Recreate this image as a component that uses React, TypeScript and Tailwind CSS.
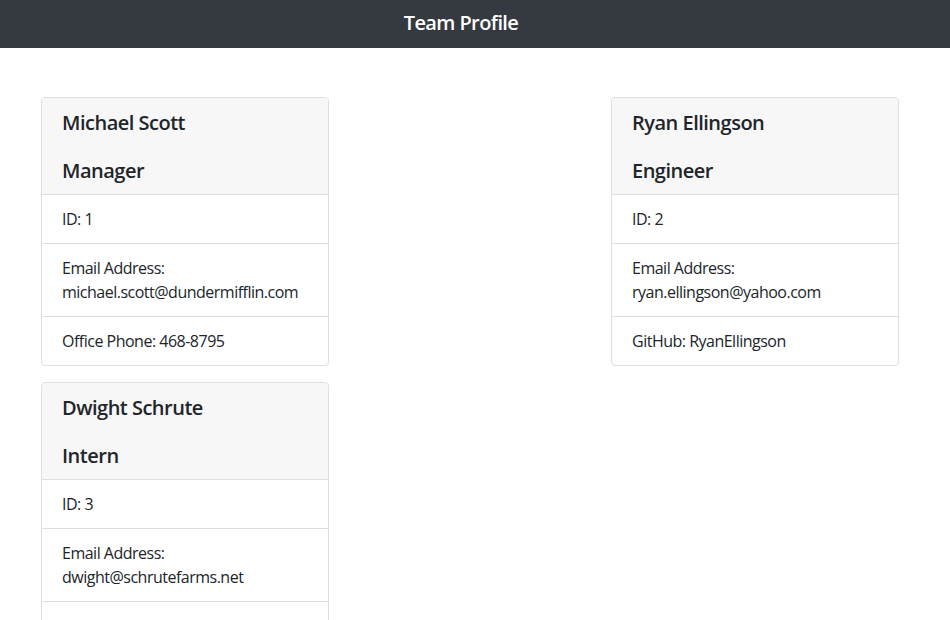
import React from "react";

type Emp = { name: string; role: string; id: number; email: string; extra: string };

const emps: Emp[] = [
  { name: "Michael Scott", role: "Manager", id: 1, email: "michael.scott@dundermifflin.com", extra: "Office Phone: 468-8795" },
  { name: "Ryan Ellingson", role: "Engineer", id: 2, email: "ryan.ellingson@yahoo.com", extra: "GitHub: RyanEllingson" },
  { name: "Dwight Schrute", role: "Intern", id: 3, email: "dwight@schrutefarms.net", extra: "School: Scranton University" },
];

function Card({ e }: { e: Emp }) {
  return (
    <div className="w-[288px] mb-[16px] border border-[#dfdfdf] rounded-[4px] bg-white overflow-hidden">
      <div className="bg-[#f7f7f7] border-b border-[#dfdfdf] px-[20px] pt-[13px] pb-[11px] flex flex-col gap-[24px]">
        <h5 className="text-[20px] leading-[24px] font-semibold tracking-[-0.5px] text-[#212529]">{e.name}</h5>
        <h5 className="text-[20px] leading-[24px] font-semibold tracking-[-0.5px] text-[#212529]">{e.role}</h5>
      </div>
      <ul className="text-[16px] leading-[24px] tracking-[-0.5px]">
        <li className="px-[20px] py-[12px] border-b border-[#dfdfdf]">ID: {e.id}</li>
        <li className="px-[20px] py-[12px] border-b border-[#dfdfdf]">
          Email Address: <span>{e.email}</span>
        </li>
        <li className="px-[20px] py-[12px]">{e.extra}</li>
      </ul>
    </div>
  );
}

export default function App() {
  return (
    <div className="min-h-[620px] bg-white text-[#212529]" style={{ fontFamily: '"Open Sans", "Noto Sans", sans-serif' }}>
      <div className="h-[48px] bg-[#343a40] flex items-center justify-center pr-[28px]">
        <span className="text-white text-[20px] font-semibold leading-[24px] tracking-[-0.6px] -mt-[3px]">Team Profile</span>
      </div>
      <div className="pt-[49px] pl-[41px]">
        <div className="w-[858px] flex flex-wrap justify-between">
          {emps.map((e) => (
            <Card key={e.id} e={e} />
          ))}
        </div>
      </div>
    </div>
  );
}
